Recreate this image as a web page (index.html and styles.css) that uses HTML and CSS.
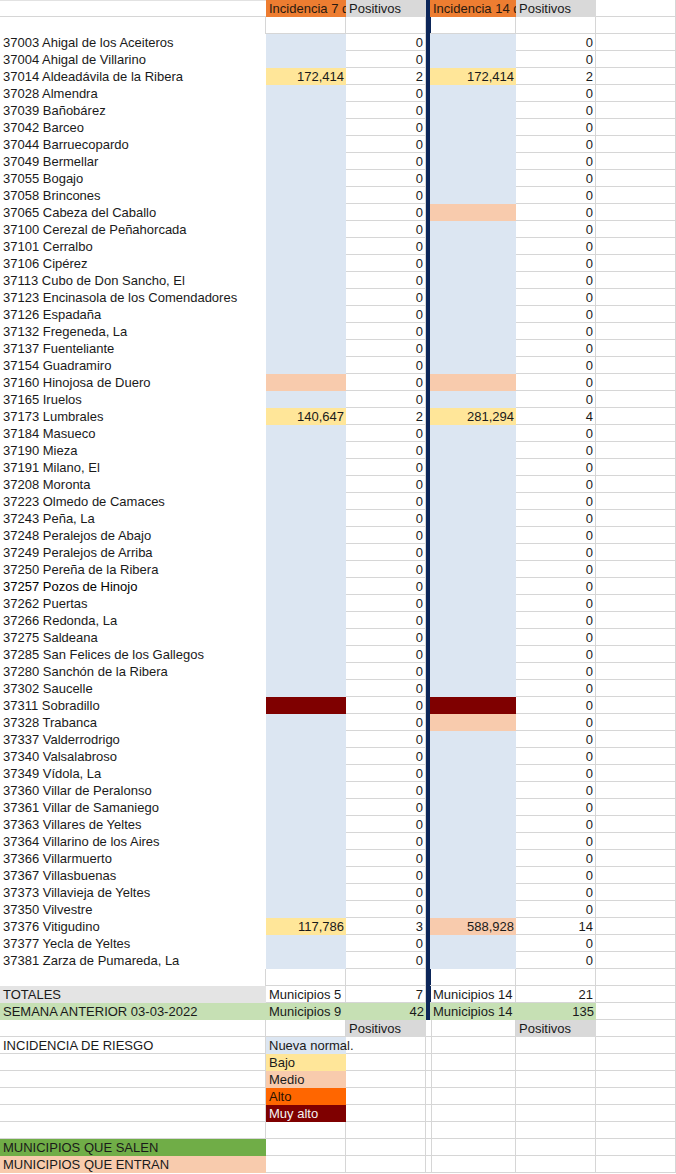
FILE: index.html
```html
<!DOCTYPE html>
<html lang="es">
<head>
<meta charset="utf-8">
<title>Incidencia</title>
<link rel="stylesheet" href="styles.css">
</head>
<body>
<div class="sheet">
<!-- row 0 -->
<div class="a gb"></div><div class="or">Incidencia 7 días</div><div class="hd">Positivos</div><div class="nv"></div><div class="or">Incidencia 14 días</div><div class="hd">Positivos</div><div class="g"></div>
<!-- row 1 -->
<div class="a gr"></div><div class="g"></div><div class="g"></div><div class="nv"></div><div class="g"></div><div class="g"></div><div class="g"></div>
<!-- data -->
<div class="a">37003 Ahigal de los Aceiteros</div><div class="bl"></div><div class="g n">0</div><div class="nv"></div><div class="bl"></div><div class="g n">0</div><div class="g"></div>
<div class="a">37004 Ahigal de Villarino</div><div class="bl"></div><div class="g n">0</div><div class="nv"></div><div class="bl"></div><div class="g n">0</div><div class="g"></div>
<div class="a">37014 Aldeadávila de la Ribera</div><div class="ye n">172,414</div><div class="g n">2</div><div class="nv"></div><div class="ye n">172,414</div><div class="g n">2</div><div class="g"></div>
<div class="a">37028 Almendra</div><div class="bl"></div><div class="g n">0</div><div class="nv"></div><div class="bl"></div><div class="g n">0</div><div class="g"></div>
<div class="a">37039 Bañobárez</div><div class="bl"></div><div class="g n">0</div><div class="nv"></div><div class="bl"></div><div class="g n">0</div><div class="g"></div>
<div class="a">37042 Barceo</div><div class="bl"></div><div class="g n">0</div><div class="nv"></div><div class="bl"></div><div class="g n">0</div><div class="g"></div>
<div class="a">37044 Barruecopardo</div><div class="bl"></div><div class="g n">0</div><div class="nv"></div><div class="bl"></div><div class="g n">0</div><div class="g"></div>
<div class="a">37049 Bermellar</div><div class="bl"></div><div class="g n">0</div><div class="nv"></div><div class="bl"></div><div class="g n">0</div><div class="g"></div>
<div class="a">37055 Bogajo</div><div class="bl"></div><div class="g n">0</div><div class="nv"></div><div class="bl"></div><div class="g n">0</div><div class="g"></div>
<div class="a">37058 Brincones</div><div class="bl"></div><div class="g n">0</div><div class="nv"></div><div class="bl"></div><div class="g n">0</div><div class="g"></div>
<div class="a">37065 Cabeza del Caballo</div><div class="bl"></div><div class="g n">0</div><div class="nv"></div><div class="pe"></div><div class="g n">0</div><div class="g"></div>
<div class="a">37100 Cerezal de Peñahorcada</div><div class="bl"></div><div class="g n">0</div><div class="nv"></div><div class="bl"></div><div class="g n">0</div><div class="g"></div>
<div class="a">37101 Cerralbo</div><div class="bl"></div><div class="g n">0</div><div class="nv"></div><div class="bl"></div><div class="g n">0</div><div class="g"></div>
<div class="a">37106 Cipérez</div><div class="bl"></div><div class="g n">0</div><div class="nv"></div><div class="bl"></div><div class="g n">0</div><div class="g"></div>
<div class="a">37113 Cubo de Don Sancho, El</div><div class="bl"></div><div class="g n">0</div><div class="nv"></div><div class="bl"></div><div class="g n">0</div><div class="g"></div>
<div class="a">37123 Encinasola de los Comendadores</div><div class="bl"></div><div class="g n">0</div><div class="nv"></div><div class="bl"></div><div class="g n">0</div><div class="g"></div>
<div class="a">37126 Espadaña</div><div class="bl"></div><div class="g n">0</div><div class="nv"></div><div class="bl"></div><div class="g n">0</div><div class="g"></div>
<div class="a">37132 Fregeneda, La</div><div class="bl"></div><div class="g n">0</div><div class="nv"></div><div class="bl"></div><div class="g n">0</div><div class="g"></div>
<div class="a">37137 Fuenteliante</div><div class="bl"></div><div class="g n">0</div><div class="nv"></div><div class="bl"></div><div class="g n">0</div><div class="g"></div>
<div class="a">37154 Guadramiro</div><div class="bl"></div><div class="g n">0</div><div class="nv"></div><div class="bl"></div><div class="g n">0</div><div class="g"></div>
<div class="a">37160 Hinojosa de Duero</div><div class="pe"></div><div class="g n">0</div><div class="nv"></div><div class="pe"></div><div class="g n">0</div><div class="g"></div>
<div class="a">37165 Iruelos</div><div class="bl"></div><div class="g n">0</div><div class="nv"></div><div class="bl"></div><div class="g n">0</div><div class="g"></div>
<div class="a">37173 Lumbrales</div><div class="ye n">140,647</div><div class="g n">2</div><div class="nv"></div><div class="ye n">281,294</div><div class="g n">4</div><div class="g"></div>
<div class="a">37184 Masueco</div><div class="bl"></div><div class="g n">0</div><div class="nv"></div><div class="bl"></div><div class="g n">0</div><div class="g"></div>
<div class="a">37190 Mieza</div><div class="bl"></div><div class="g n">0</div><div class="nv"></div><div class="bl"></div><div class="g n">0</div><div class="g"></div>
<div class="a">37191 Milano, El</div><div class="bl"></div><div class="g n">0</div><div class="nv"></div><div class="bl"></div><div class="g n">0</div><div class="g"></div>
<div class="a">37208 Moronta</div><div class="bl"></div><div class="g n">0</div><div class="nv"></div><div class="bl"></div><div class="g n">0</div><div class="g"></div>
<div class="a">37223 Olmedo de Camaces</div><div class="bl"></div><div class="g n">0</div><div class="nv"></div><div class="bl"></div><div class="g n">0</div><div class="g"></div>
<div class="a">37243 Peña, La</div><div class="bl"></div><div class="g n">0</div><div class="nv"></div><div class="bl"></div><div class="g n">0</div><div class="g"></div>
<div class="a">37248 Peralejos de Abajo</div><div class="bl"></div><div class="g n">0</div><div class="nv"></div><div class="bl"></div><div class="g n">0</div><div class="g"></div>
<div class="a">37249 Peralejos de Arriba</div><div class="bl"></div><div class="g n">0</div><div class="nv"></div><div class="bl"></div><div class="g n">0</div><div class="g"></div>
<div class="a">37250 Pereña de la Ribera</div><div class="bl"></div><div class="g n">0</div><div class="nv"></div><div class="bl"></div><div class="g n">0</div><div class="g"></div>
<div class="a dk">37257 Pozos de Hinojo</div><div class="bl"></div><div class="g n">0</div><div class="nv"></div><div class="bl"></div><div class="g n">0</div><div class="g"></div>
<div class="a">37262 Puertas</div><div class="bl"></div><div class="g n">0</div><div class="nv"></div><div class="bl"></div><div class="g n">0</div><div class="g"></div>
<div class="a">37266 Redonda, La</div><div class="bl"></div><div class="g n">0</div><div class="nv"></div><div class="bl"></div><div class="g n">0</div><div class="g"></div>
<div class="a">37275 Saldeana</div><div class="bl"></div><div class="g n">0</div><div class="nv"></div><div class="bl"></div><div class="g n">0</div><div class="g"></div>
<div class="a">37285 San Felices de los Gallegos</div><div class="bl"></div><div class="g n">0</div><div class="nv"></div><div class="bl"></div><div class="g n">0</div><div class="g"></div>
<div class="a">37280 Sanchón de la Ribera</div><div class="bl"></div><div class="g n">0</div><div class="nv"></div><div class="bl"></div><div class="g n">0</div><div class="g"></div>
<div class="a">37302 Saucelle</div><div class="bl"></div><div class="g n">0</div><div class="nv"></div><div class="bl"></div><div class="g n">0</div><div class="g"></div>
<div class="a">37311 Sobradillo</div><div class="ma"></div><div class="g n">0</div><div class="nv"></div><div class="ma"></div><div class="g n">0</div><div class="g"></div>
<div class="a">37328 Trabanca</div><div class="bl"></div><div class="g n">0</div><div class="nv"></div><div class="pe"></div><div class="g n">0</div><div class="g"></div>
<div class="a">37337 Valderrodrigo</div><div class="bl"></div><div class="g n">0</div><div class="nv"></div><div class="bl"></div><div class="g n">0</div><div class="g"></div>
<div class="a">37340 Valsalabroso</div><div class="bl"></div><div class="g n">0</div><div class="nv"></div><div class="bl"></div><div class="g n">0</div><div class="g"></div>
<div class="a">37349 Vídola, La</div><div class="bl"></div><div class="g n">0</div><div class="nv"></div><div class="bl"></div><div class="g n">0</div><div class="g"></div>
<div class="a">37360 Villar de Peralonso</div><div class="bl"></div><div class="g n">0</div><div class="nv"></div><div class="bl"></div><div class="g n">0</div><div class="g"></div>
<div class="a">37361 Villar de Samaniego</div><div class="bl"></div><div class="g n">0</div><div class="nv"></div><div class="bl"></div><div class="g n">0</div><div class="g"></div>
<div class="a">37363 Villares de Yeltes</div><div class="bl"></div><div class="g n">0</div><div class="nv"></div><div class="bl"></div><div class="g n">0</div><div class="g"></div>
<div class="a">37364 Villarino de los Aires</div><div class="bl"></div><div class="g n">0</div><div class="nv"></div><div class="bl"></div><div class="g n">0</div><div class="g"></div>
<div class="a">37366 Villarmuerto</div><div class="bl"></div><div class="g n">0</div><div class="nv"></div><div class="bl"></div><div class="g n">0</div><div class="g"></div>
<div class="a">37367 Villasbuenas</div><div class="bl"></div><div class="g n">0</div><div class="nv"></div><div class="bl"></div><div class="g n">0</div><div class="g"></div>
<div class="a">37373 Villavieja de Yeltes</div><div class="bl"></div><div class="g n">0</div><div class="nv"></div><div class="bl"></div><div class="g n">0</div><div class="g"></div>
<div class="a">37350 Vilvestre</div><div class="bl"></div><div class="g n">0</div><div class="nv"></div><div class="bl"></div><div class="g n">0</div><div class="g"></div>
<div class="a">37376 Vitigudino</div><div class="ye n">117,786</div><div class="g n">3</div><div class="nv"></div><div class="pe n">588,928</div><div class="g n">14</div><div class="g"></div>
<div class="a">37377 Yecla de Yeltes</div><div class="bl"></div><div class="g n">0</div><div class="nv"></div><div class="bl"></div><div class="g n">0</div><div class="g"></div>
<div class="a">37381 Zarza de Pumareda, La</div><div class="bl"></div><div class="g n">0</div><div class="nv"></div><div class="bl"></div><div class="g n">0</div><div class="g"></div>
<!-- blank -->
<div class="a gr"></div><div class="g"></div><div class="g"></div><div class="nv"></div><div class="g"></div><div class="g"></div><div class="g"></div>
<!-- totals -->
<div class="a tot">TOTALES</div><div class="g">Municipios 5</div><div class="g n">7</div><div class="nv"></div><div class="g">Municipios 14</div><div class="g n">21</div><div class="g"></div>
<div class="a sem">SEMANA ANTERIOR 03-03-2022</div><div class="sem">Municipios 9</div><div class="sem n">42</div><div class="nv"></div><div class="sem">Municipios 14</div><div class="sem n">135</div><div class="g"></div>
<div class="a g"></div><div class="g"></div><div class="hd">Positivos</div><div class="g"></div><div class="g"></div><div class="hd">Positivos</div><div class="g"></div>
<div class="a g">INCIDENCIA DE RIESGO</div><div class="bl ov">Nueva normal.</div><div class="g"></div><div class="g"></div><div class="g"></div><div class="g"></div><div class="g"></div>
<div class="a g"></div><div class="ye">Bajo</div><div class="g"></div><div class="g"></div><div class="g"></div><div class="g"></div><div class="g"></div>
<div class="a g"></div><div class="pe">Medio</div><div class="g"></div><div class="g"></div><div class="g"></div><div class="g"></div><div class="g"></div>
<div class="a g"></div><div class="al">Alto</div><div class="g"></div><div class="g"></div><div class="g"></div><div class="g"></div><div class="g"></div>
<div class="a g"></div><div class="ma">Muy alto</div><div class="g"></div><div class="g"></div><div class="g"></div><div class="g"></div><div class="g"></div>
<div class="a g"></div><div class="g"></div><div class="g"></div><div class="g"></div><div class="g"></div><div class="g"></div><div class="g"></div>
<div class="a sal">MUNICIPIOS QUE SALEN</div><div class="g"></div><div class="g"></div><div class="g"></div><div class="g"></div><div class="g"></div><div class="g"></div>
<div class="a pe">MUNICIPIOS QUE ENTRAN</div><div class="g"></div><div class="g"></div><div class="g"></div><div class="g"></div><div class="g"></div><div class="g"></div>
</div>
</body>
</html>
```

FILE: styles.css
```css
html, body {
  margin: 0;
  padding: 0;
  background: #ffffff;
}

.sheet {
  display: grid;
  grid-template-columns: 266px 80px 80px 4px 86px 80px 80px;
  grid-auto-rows: 17px;
  width: 676px;
  font-family: "Liberation Sans", Arial, sans-serif;
  font-size: 13px;
  color: #1a1a1a;
}

.sheet > div {
  box-sizing: border-box;
  height: 17px;
  line-height: 16px;
  padding: 1px 2px 0 3px;
  white-space: nowrap;
  overflow: hidden;
}

.g {
  border-right: 1px solid #d6d6d6;
  border-bottom: 1px solid #d6d6d6;
}

.a {
  padding-left: 3px;
}

.gb {
  border-bottom: 1px solid #d6d6d6;
  box-shadow: inset 0 1px 0 #e2e2e2;
}

.gr {
  border-right: 1px solid #d6d6d6;
}

.n {
  text-align: right;
}

.dk {
  color: #000000;
}

.or {
  background: #ed7d31;
  color: #2a1a10;
}

.hd {
  background: #d9d9d9;
}

.nv {
  background: #0c2659;
}

.bl {
  background: #dce6f2;
}

.ye {
  background: #ffe699;
}

.pe {
  background: #f8cbad;
}

.ma {
  background: #7f0000;
  color: #f4f4f4;
}

.al {
  background: #ff6600;
  color: #2a1200;
}

.tot {
  background: #e4e4e4;
}

.sem {
  background: #c6e0b4;
}

.sal {
  background: #70ad47;
  color: #1a1a1a;
}

.sheet > .ov {
  overflow: visible;
  position: relative;
  z-index: 1;
}
```
